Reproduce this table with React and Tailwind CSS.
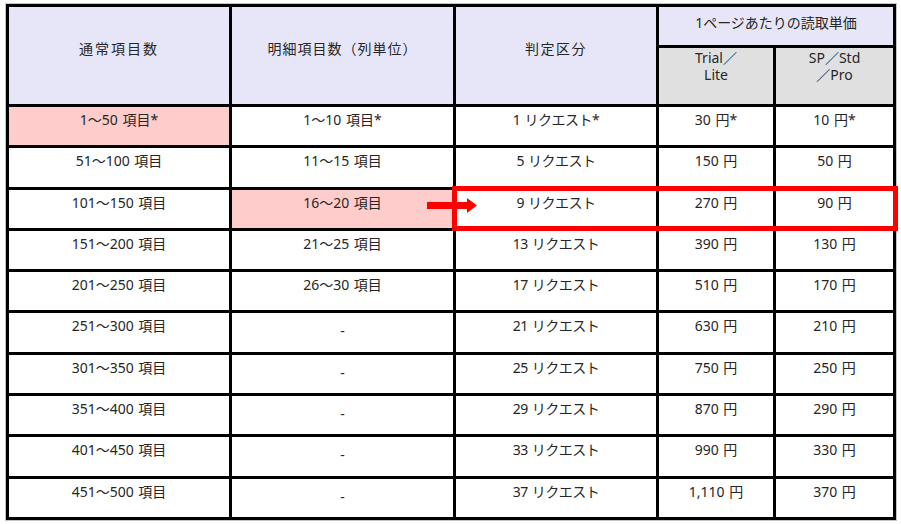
const rows = [
  ['1～50 項目*', '1～10 項目*', '1 リクエスト*', '30 円*', '10 円*'],
  ['51～100 項目', '11～15 項目', '5 リクエスト', '150 円', '50 円'],
  ['101～150 項目', '16～20 項目', '9 リクエスト', '270 円', '90 円'],
  ['151～200 項目', '21～25 項目', '13 リクエスト', '390 円', '130 円'],
  ['201～250 項目', '26～30 項目', '17 リクエスト', '510 円', '170 円'],
  ['251～300 項目', '-', '21 リクエスト', '630 円', '210 円'],
  ['301～350 項目', '-', '25 リクエスト', '750 円', '250 円'],
  ['351～400 項目', '-', '29 リクエスト', '870 円', '290 円'],
  ['401～450 項目', '-', '33 リクエスト', '990 円', '330 円'],
  ['451～500 項目', '-', '37 リクエスト', '1,110 円', '370 円'],
];

// pink highlight cells: [row, col]
const pink = { '0-0': true, '2-1': true };

function Cell({ value, hl, col }) {
  return (
    <div
      className={`${hl ? 'bg-[#ffcccc]' : 'bg-white'} text-center pt-[3px] leading-[20px] [word-spacing:1px] ${
        col === 2 ? 'tracking-[-0.5px]' : ''
      }`}
    >
      {value === '-' ? (
        <span className="inline-block translate-y-[5px]">-</span>
      ) : (
        value
      )}
    </div>
  );
}

export default function App() {
  return (
    <div
      className="relative w-[901px] h-[524px] bg-white text-[14px] text-[#262626]"
      style={{ fontFamily: '"Noto Sans", "Noto Sans CJK JP", sans-serif' }}
    >
      <div className="pt-[3px] pl-[5px]">
        <div className="inline-block border border-[#c4c4c4]">
          <div className="grid grid-cols-[220px_221px_200px_114px_117px] grid-rows-[38px_56px_repeat(10,38.3px)] gap-[3px] p-[3px] bg-black">
            {/* ── Header ── */}
            <div className="row-span-2 bg-[#e6e6f8] text-center pt-[32px] leading-[20px] tracking-[2px]">通常項目数</div>
            <div className="row-span-2 bg-[#e6e6f8] text-center pt-[32px] leading-[20px] tracking-[1px]">明細項目数（列単位）</div>
            <div className="row-span-2 bg-[#e6e6f8] text-center pt-[32px] leading-[20px] tracking-[1.5px]">判定区分</div>
            <div className="col-span-2 bg-[#e6e6f8] text-center pt-[6px] leading-[20px]">1ページあたりの読取単価</div>
            <div className="bg-[#e0e0e0] text-center pt-[1px] leading-[17px]">
              Trial／<br />Lite
            </div>
            <div className="bg-[#e0e0e0] text-center pt-[1px] leading-[17px]">
              SP／Std<br />／Pro
            </div>

            {/* ── Rows ── */}
            {rows.map((r, i) =>
              r.map((v, j) => <Cell key={`${i}-${j}`} value={v} col={j} hl={pink[`${i}-${j}`]} />)
            )}
          </div>
        </div>
      </div>

      {/* red highlight box over the 9-request row */}
      <div className="absolute left-[452px] top-[186px] w-[446px] h-[45px] border-[5px] border-[#ff0000] pointer-events-none" />

      {/* arrow */}
      <svg className="absolute left-[426px] top-[197px]" width="54" height="18" viewBox="0 0 54 18">
        <rect x="1" y="5" width="41" height="7" fill="#ff0000" />
        <polygon points="41,1 51,8.5 41,16" fill="#ff0000" />
      </svg>
    </div>
  );
}
